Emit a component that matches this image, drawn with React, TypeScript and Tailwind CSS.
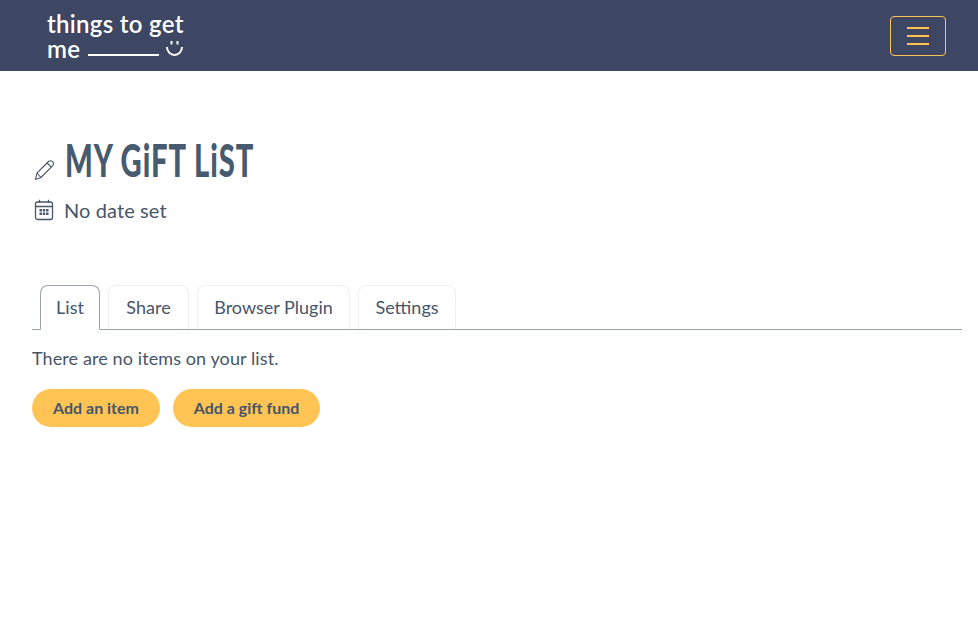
import React from 'react';

const sans = "font-['Lato','Noto_Sans',sans-serif]";

const Header = () => (
    <header className="h-[71px] bg-[#3d4663] flex items-center justify-between pl-[47px] pr-8">
        <div className="font-['Lato',sans-serif] text-white text-[24px] leading-[25px] font-semibold tracking-[0.3px] w-[140px] whitespace-nowrap">
            <div>things to get</div>
            <div className="flex items-start h-[25px]">
                <span>me</span>
                <span className="ml-[8px] mt-[18px] w-[71px] h-[2px] bg-white"></span>
                <svg className="ml-[7px] mt-[4px] shrink-0" width="17" height="18" viewBox="0 0 17 18" fill="none" stroke="white" strokeWidth="2">
                    <path d="M1 7 a7.5 8 0 0 0 15 0" />
                    <path d="M5.5 1 v3.5 M11.5 1 v3.5" />
                </svg>
            </div>
        </div>
        <button className="w-14 h-10 border border-[#ffc453] rounded flex flex-col items-center justify-center gap-[6px]">
            <span className="block w-[22px] h-[2px] bg-[#ffc453]"></span>
            <span className="block w-[22px] h-[2px] bg-[#ffc453]"></span>
            <span className="block w-[22px] h-[2px] bg-[#ffc453]"></span>
        </button>
    </header>
);

const Tab = ({label, width, active}: {label: string, width: string, active?: boolean}) => (
    <div className={(active
        ? "h-[45px] flex items-center justify-center border border-[#9aa3ad] border-b-white rounded-t-lg bg-white -mb-px "
        : "h-[44px] flex items-center justify-center border border-[#eef0f2] border-b-0 rounded-t-lg ") + width}>
        {label}
    </div>
);

const App = () => {
    return (
        <div className={`min-h-[637px] bg-white text-[#475569] ${sans}`}>
            <Header />
            <main className="px-8 pt-[60px]">
                <div className="flex items-end h-[60px]">
                    <svg className="ml-[2px] mb-[10px] shrink-0" width="21" height="22" viewBox="0 0 21 22" fill="none" stroke="#475569" strokeWidth="1.1">
                        <path d="M1.5 20.5 L3 14 L14.5 2.5 Q16.5 .8 18.7 2.7 Q20.3 4.8 18.5 6.8 L7 18.5 Z" />
                        <path d="M3 14 L7 18.5 M13 4 L17.5 8.2" />
                    </svg>
                    <h1 className="ml-[10px] mb-[2px] font-['Lato',sans-serif] font-black text-[46px] leading-[58px] tracking-[1.5px] text-[#475a70] whitespace-nowrap origin-left scale-x-[0.635]">MY GiFT LiST</h1>
                </div>
                <div className="flex items-center mt-[3px] h-[32px] text-[20px]">
                    <svg className="ml-[2px]" width="20" height="22" viewBox="0 0 20 22" fill="none" stroke="#475569" strokeWidth="1.3">
                        <rect x="1.5" y="3" width="17" height="17.5" rx="2" />
                        <path d="M1.5 7.5 H18.5 M5.5 .8 V4 M14.5 .8 V4" />
                        <path d="M5.5 10 h2.4 v2.4 h-2.4z M8.8 10 h2.4 v2.4 h-2.4z M12.1 10 h2.4 v2.4 h-2.4z M5.5 13.5 h2.4 v2.4 h-2.4z M8.8 13.5 h2.4 v2.4 h-2.4z M12.1 13.5 h2.4 v2.4 h-2.4z" fill="#475569" stroke="none" />
                    </svg>
                    <span className="ml-[10px] tracking-[0.1px]">No date set</span>
                </div>
                <nav className="mt-[59px] flex gap-2 pl-2 border-b border-[#9aa3ad] text-[18px] w-[930px]">
                    <Tab label="List" width="w-[60px]" active />
                    <Tab label="Share" width="w-[81px]" />
                    <Tab label="Browser Plugin" width="w-[153px]" />
                    <Tab label="Settings" width="w-[98px]" />
                </nav>
                <p className="mt-[16px] text-[18px] leading-[24px] tracking-[0.1px]">There are no items on your list.</p>
                <div className="mt-[19px] flex gap-[13px]">
                    <button className="h-[38px] w-[128px] rounded-full bg-[#ffc453] text-[16px] font-bold">Add an item</button>
                    <button className="h-[38px] w-[147px] rounded-full bg-[#ffc453] text-[16px] font-bold">Add a gift fund</button>
                </div>
            </main>
        </div>
    );
};

export default App;
